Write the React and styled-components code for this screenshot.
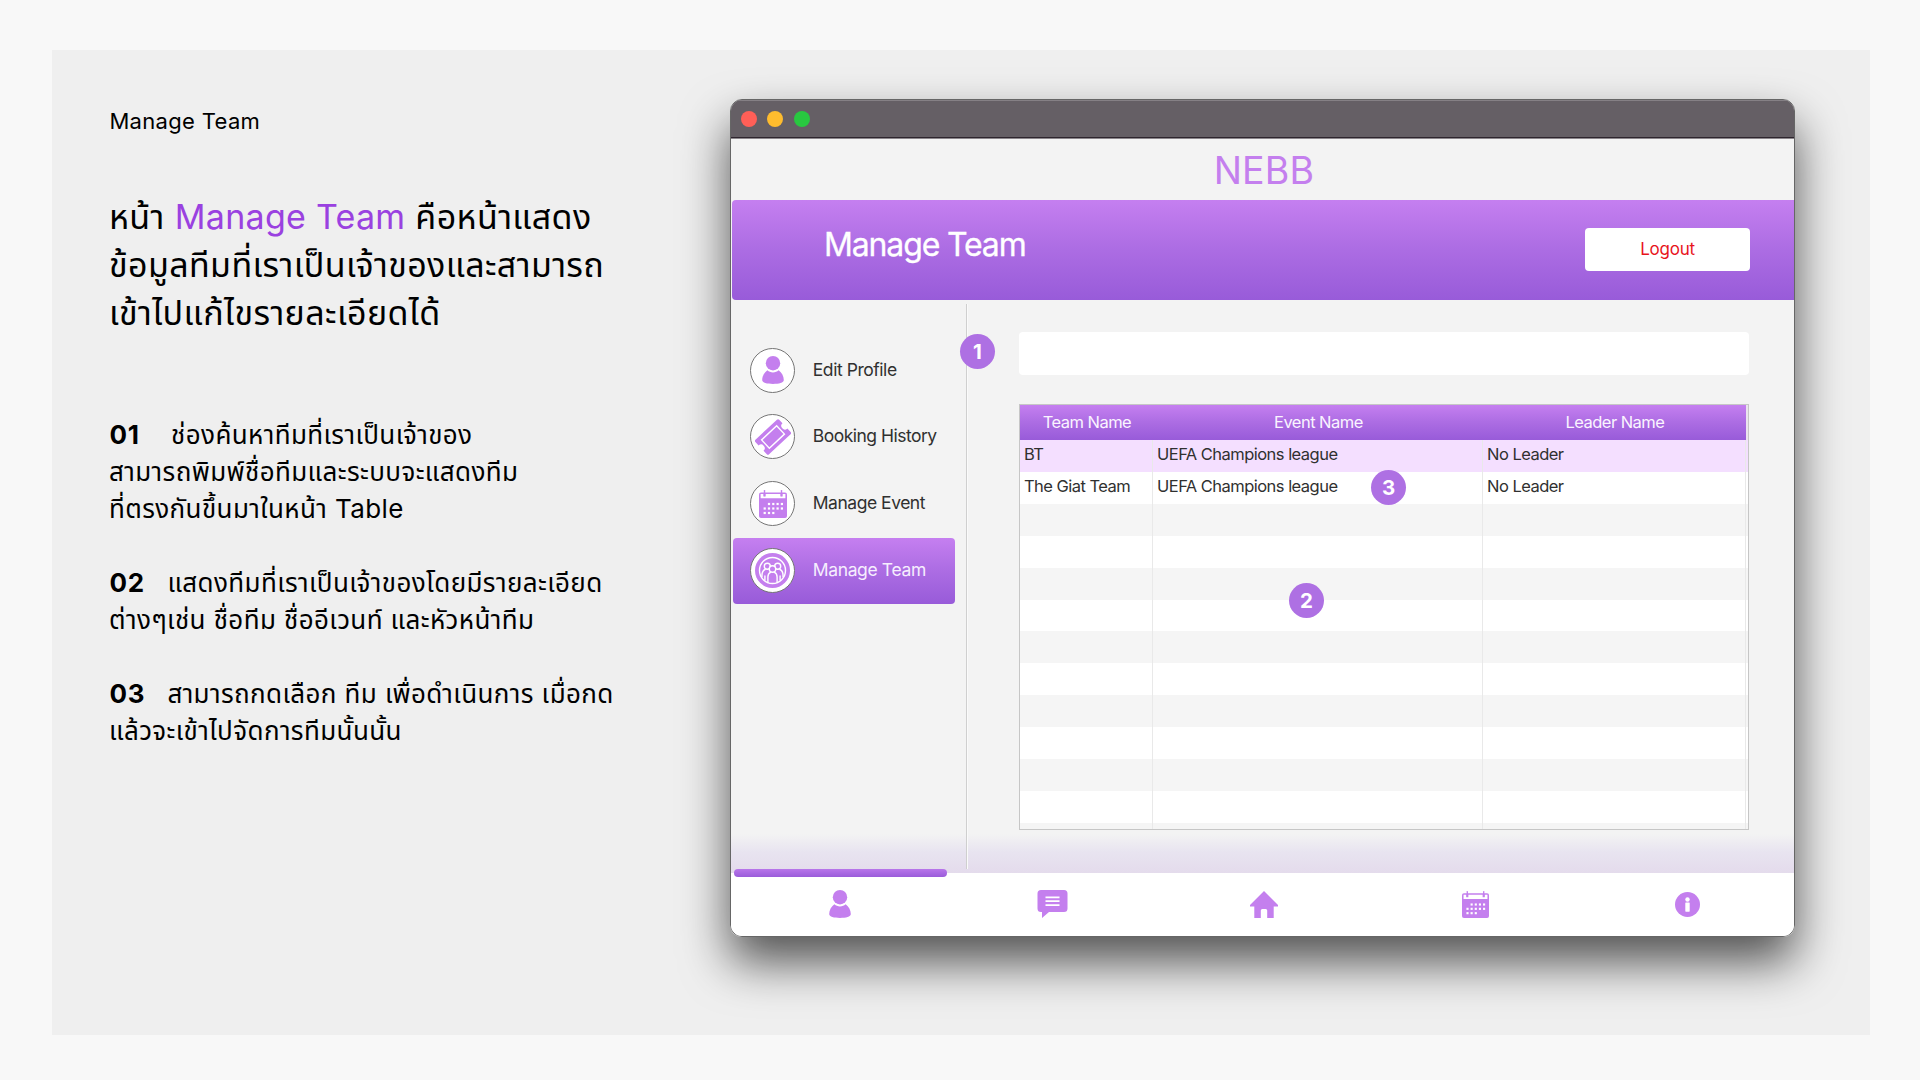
import React from 'react';
import styled, { createGlobalStyle, css } from 'styled-components';

const GlobalStyle = createGlobalStyle`
  *, *::before, *::after { box-sizing: border-box; }
  body { margin: 0; background: #f8f8f8; }
`;

const accent = '#c47fee';
const gradient = 'linear-gradient(180deg, #c57ff0 0%, #ae6ee4 45%, #985bd9 100%)';

const Page = styled.main`
  width: 1920px;
  height: 1080px;
  padding: 50px 50px 45px 52px;
  background: #f8f8f8;
  overflow: hidden;
  font-family: Inter, "Noto Sans Thai", "Noto Sans", sans-serif;
  color: #000;
`;

const Panel = styled.div`
  display: flex;
  height: 985px;
  background: #efefef;
`;

const Notes = styled.section`
  width: 678px;
  padding: 57px 0 0 57px;
  white-space: pre;
`;

const Eyebrow = styled.p`
  margin: 0;
  padding-left: 0.4px;
  font-size: 22px;
  line-height: 28px;
  letter-spacing: 0.32px;
`;

const Heading = styled.h1`
  margin: 58px 0 79px;
  font-size: 34px;
  font-weight: 400;
  line-height: 48px;
  letter-spacing: 0.4px;
`;

const Line = styled.span`
  display: block;
`;

const Highlight = styled.span`
  color: #9a41e0;
  letter-spacing: 0.28px;
`;

const Note = styled.p`
  margin: 0 0 37px;
  font-size: 26px;
  line-height: 37px;
  letter-spacing: 0.4px;
`;

const Num = styled.strong`
  display: inline-block;
  width: ${(p) => p.$w}px;
  padding-left: 0.4px;
  font-weight: 700;
  letter-spacing: 0.9px;
`;

const Window = styled.section`
  position: relative;
  width: 1065px;
  height: 838px;
  margin-top: 49px;
  border-radius: 12px;
  box-shadow: 0 25px 48px rgba(0, 0, 0, 0.66);
`;

const Frame = styled.div`
  display: flex;
  flex-direction: column;
  height: 100%;
  border: 1px solid #666;
  border-radius: 12px;
  overflow: hidden;
  background: #f3f3f3;
`;

const TitleBar = styled.header`
  display: flex;
  align-items: center;
  gap: 10.5px;
  height: 39px;
  flex: none;
  padding: 0 0 1px 9.5px;
  background: #655f65;
  border-top: 1px solid #858085;
  border-bottom: 1px solid #8b868b;
  box-shadow: inset 0 -1px 0 #2e252e;
`;

const Light = styled.span`
  width: 16px;
  height: 16px;
  border-radius: 50%;
  background: ${(p) => p.$color};
`;

const Brand = styled.div`
  display: flex;
  align-items: center;
  justify-content: center;
  height: 61px;
  flex: none;
  padding: 2px 0 0 3px;
  color: ${accent};
  font-size: 37.5px;
  letter-spacing: 0.2px;
`;

const Hero = styled.div`
  display: flex;
  align-items: center;
  justify-content: space-between;
  height: 100px;
  flex: none;
  margin-left: 1px;
  padding: 0 44px 0 92px;
  border-radius: 4px 0 0 4px;
  background: ${gradient};
`;

const HeroTitle = styled.h2`
  margin: 0;
  padding-bottom: 11px;
  color: #fff;
  font-size: 32px;
  font-weight: 400;
  letter-spacing: -1.15px;
  -webkit-text-stroke: 0.3px #fff;
`;

const Logout = styled.button`
  width: 165px;
  height: 43px;
  margin-bottom: 1px;
  padding: 0 0 1px;
  border: 0;
  border-radius: 4px;
  background: #fff;
  color: #e8141c;
  font: 400 17px Inter, sans-serif;
  letter-spacing: -0.25px;
`;

const Body = styled.div`
  display: flex;
  flex: 1;
  background: linear-gradient(180deg, rgba(228, 219, 237, 0) 0 534px, #e8e4f0 552px, #e4dbec 573px);
`;

const Sidebar = styled.nav`
  display: flex;
  flex-direction: column;
  gap: 0.67px;
  width: 235px;
  padding: 38px 0 0 2px;
`;

const SideItem = styled.a`
  display: flex;
  align-items: center;
  gap: 17.8px;
  width: 222px;
  height: 66px;
  padding: 0 0 1.5px 17px;
  border-radius: 4px;
  color: #303030;
  font-size: 17.5px;
  letter-spacing: ${(p) => p.$track}px;
  ${(p) => p.$active && css`
    background: ${gradient};
    color: #f6eefe;
  `}
`;

const SideLabel = styled.span`
  padding-bottom: 2px;
`;

const Avatar = styled.span`
  display: flex;
  align-items: center;
  justify-content: center;
  width: 45px;
  height: 45px;
  border: 1px solid #757575;
  border-radius: 50%;
  background: #fff;
`;

const Divider = styled.div`
  width: 2px;
  margin: 4px 0 4px;
  background: linear-gradient(90deg, #cfcfcf 50%, #fafafa 50%);
`;

const Content = styled.div`
  padding: 32px 0 0 51px;
`;

const Search = styled.input`
  display: block;
  width: 730px;
  height: 43px;
  padding: 0 12px;
  border: 0;
  border-radius: 4px;
  background: #fff;
`;

const Table = styled.div`
  display: flex;
  flex-direction: column;
  width: 730px;
  height: 426px;
  margin-top: 29px;
  border: 1px solid #c6c6c6;
  background: #f5f5f5;
  color: #303030;
  font-size: 16.5px;
  letter-spacing: -0.53px;
`;

const columns = css`
  display: grid;
  grid-template-columns: 133px 330px 263px;
`;

const HeadRow = styled.div`
  ${columns}
  height: 35px;
  flex: none;
  background: linear-gradient(#ebe3ef, #ebe3ef) right / 2px 100% no-repeat, ${gradient};
  color: #faf4ff;
  text-align: center;
  line-height: 35px;
`;

const HeadCell = styled.span`
  padding-left: 0.8px;
`;

const Row = styled.div`
  ${columns}
  height: 31.92px;
  flex: none;
  background: ${(p) => p.$bg};
`;

const Cell = styled.div`
  padding-left: 4px;
  line-height: 29px;
  border-right: 1px solid #e9e9e9;
`;

const Filler = styled.div`
  ${columns}
  flex: 1;
`;

const TabBar = styled.nav`
  position: relative;
  display: grid;
  grid-template-columns: repeat(5, 211.8px);
  height: 63px;
  flex: none;
  padding: 0 0 1px 3.5px;
  background: #fff;
`;

const Indicator = styled.span`
  position: absolute;
  left: 3px;
  top: -4px;
  width: 213px;
  height: 7.5px;
  border-radius: 4px;
  background: linear-gradient(180deg, #b875ea, #9a5cda);
`;

const Tab = styled.a`
  display: flex;
  align-items: center;
  justify-content: center;
`;

const Badge = styled.span`
  position: absolute;
  left: ${(p) => p.$x}px;
  top: ${(p) => p.$y}px;
  width: 35px;
  height: 35px;
  border-radius: 50%;
  background: #ae70e3;
  color: #fff;
  font-size: 20.5px;
  font-weight: 700;
  line-height: 35px;
  text-align: center;
`;

const Icon = styled.svg`
  display: block;
  flex: none;
  fill: ${accent};
`;

const UserIcon = () => (
  <Icon width="28" height="28" viewBox="0 0 28 28">
    <circle cx="14" cy="7.2" r="7.2" />
    <path d="M8.4 14.2c1.5 1.4 3.4 2.2 5.6 2.2s4.1-.8 5.6-2.2c3.2 2.2 5.2 6 5.2 9.9 0 2.7-4.8 3.9-10.8 3.9S3.2 26.8 3.2 24.1c0-3.9 2-7.700 5.200-9.900z" />
  </Icon>
);

const TicketIcon = () => (
  <Icon width="36" height="36" viewBox="-18 -18 36 36">
    <g transform="rotate(-43)">
      <path d="M-14.7-10h29.4q1.600 0 1.600 1.600v4.800a3.600 3.600 0 0 0 0 7.200v4.800q0 1.600-1.600 1.600h-29.400q-1.600 0-1.600-1.600v-4.800a3.600 3.600 0 0 0 0-7.200v-4.800q0-1.600 1.600-1.600z" />
      <rect x="-10.300" y="-5.700" width="20.600" height="11.400" fill="none" stroke="#fff" strokeWidth="1.400" />
    </g>
  </Icon>
);

const dotRows = [
  { y: 14, xs: [10, 14.3, 18.6, 22.9] },
  { y: 18.5, xs: [5.7, 10, 14.3, 18.6, 22.9] },
  { y: 23, xs: [5.7, 10, 14.3] },
];

const CalendarIcon = ({ width, height }) => (
  <Icon width={width} height={height} viewBox="0 0 28 28" preserveAspectRatio="none">
    <rect y="2.4" width="28" height="25.6" rx="2" />
    <path d="M1.6 4h2.8v2.4h2.2V4h14.8v2.4h2.2V4h2.8v4.3H1.600z" fill="#fff" />
    <rect x="4.800" width="1.400" height="6.200" rx=".6" />
    <rect x="21.800" width="1.400" height="6.200" rx=".6" />
    {dotRows.map(({ y, xs }) => xs.map((x) => (
      <rect key={`${x}-${y}`} x={x - 1.1} y={y - 1.1} width="2.2" height="2.2" fill="#fff" />
    )))}
  </Icon>
);

const TeamIcon = () => (
  <Icon width="35" height="35" viewBox="-17.5 -17.5 35 35">
    <circle r="17.5" />
    <g fill="none" stroke="#fff" strokeWidth="1.4" strokeLinecap="round">
      <circle r="13" />
      <circle cx="-5.2" cy="-4.2" r="3" />
      <circle cx="5.2" cy="-4.2" r="3" />
      <path d="M-10.5 6c-.3-3.8.8-6 3-7M10.5 6c.3-3.8-.8-6-3-7" />
      <circle cx="0" cy="-1.5" r="3.2" fill={accent} />
      <path d="M-4.6 12V6.5c0-2.600 1-4 2.600-4.700M4.600 12V6.500c0-2.600-1-4-2.600-4.700M-7.600 9.500V5.500M7.600 9.500V5.500" />
    </g>
  </Icon>
);

const ChatIcon = () => (
  <Icon width="31" height="28" viewBox="0 0 31 28">
    <path d="M4 0h23q3.5 0 3.5 3.5v15q0 3.5-3.5 3.5H12l-7 6v-6H4Q.5 22 .5 18.5v-15Q.5 0 4 0z" />
    <path d="M8.5 7.3h14M8.5 11.2h14M8.5 15.1h14" stroke="#fff" strokeWidth="1.7" />
  </Icon>
);

const HomeIcon = () => (
  <Icon width="28" height="27" viewBox="0 0 28 27">
    <path d="M14 0l14 14v1.5h-4.3V27h-6.5v-7.5q0-1.5-1.5-1.5h-3.4q-1.500 0-1.500 1.500V27H4.300V15.500H0V14z" />
  </Icon>
);

const InfoIcon = () => (
  <Icon width="25" height="25" viewBox="0 0 25 25">
    <circle cx="12.5" cy="12.5" r="12.5" />
    <circle cx="12.5" cy="7.5" r="2.2" fill="#fff" />
    <rect x="10.3" y="10.5" width="4.4" height="9.2" rx=".6" fill="#fff" />
  </Icon>
);

const sideItems = [
  { label: 'Edit Profile', icon: <UserIcon />, track: -0.45 },
  { label: 'Booking History', icon: <TicketIcon />, track: -0.51 },
  { label: 'Manage Event', icon: <CalendarIcon width={28} height={28} />, track: -0.48 },
  { label: 'Manage Team', icon: <TeamIcon />, track: -0.37, active: true },
];

const teams = [
  ['BT', 'UEFA Champions league', 'No Leader'],
  ['The Giat Team', 'UEFA Champions league', 'No Leader'],
  ...Array.from({ length: 10 }, () => ['', '', '']),
];

const rowColor = (i) => (i === 0 ? '#f4dfff' : i % 2 ? '#fff' : '#f5f5f5');

export default function App() {
  return (
    <>
      <GlobalStyle />
      <Page>
        <Panel>
          <Notes>
            <Eyebrow>Manage Team</Eyebrow>
            <Heading>
              <Line>หน้า <Highlight>Manage Team</Highlight> คือหน้าแสดง</Line>
              <Line>ข้อมูลทีมที่เราเป็นเจ้าของและสามารถ</Line>
              <Line>เข้าไปแก้ไขรายละเอียดได้</Line>
            </Heading>
            <Note>
              <Line><Num $w={62}>01</Num>ช่องค้นหาทีมที่เราเป็นเจ้าของ</Line>
              <Line>สามารถพิมพ์ชื่อทีมและระบบจะแสดงทีม</Line>
              <Line>ที่ตรงกันขึ้นมาในหน้า Table</Line>
            </Note>
            <Note>
              <Line><Num $w={58.4}>02</Num>แสดงทีมที่เราเป็นเจ้าของโดยมีรายละเอียด</Line>
              <Line>ต่างๆเช่น ชื่อทีม ชื่ออีเวนท์ และหัวหน้าทีม</Line>
            </Note>
            <Note>
              <Line><Num $w={58.4}>03</Num>สามารถกดเลือก ทีม เพื่อดำเนินการ เมื่อกด</Line>
              <Line>แล้วจะเข้าไปจัดการทีมนั้นนั้น</Line>
            </Note>
          </Notes>

          <Window>
            <Frame>
              <TitleBar>
                <Light $color="#ff5f57" />
                <Light $color="#febc2e" />
                <Light $color="#28c840" />
              </TitleBar>
              <Brand>NEBB</Brand>
              <Hero>
                <HeroTitle>Manage Team</HeroTitle>
                <Logout>Logout</Logout>
              </Hero>
              <Body>
                <Sidebar>
                  {sideItems.map((item) => (
                    <SideItem key={item.label} $active={item.active} $track={item.track}>
                      <Avatar>{item.icon}</Avatar>
                      <SideLabel>{item.label}</SideLabel>
                    </SideItem>
                  ))}
                </Sidebar>
                <Divider />
                <Content>
                  <Search aria-label="Search" />
                  <Table>
                    <HeadRow>
                      <HeadCell>Team Name</HeadCell>
                      <HeadCell>Event Name</HeadCell>
                      <HeadCell>Leader Name</HeadCell>
                    </HeadRow>
                    {teams.map((team, i) => (
                      <Row key={i} $bg={rowColor(i)}>
                        {team.map((value, c) => (
                          <Cell key={c}>{value}</Cell>
                        ))}
                      </Row>
                    ))}
                    <Filler><Cell /><Cell /><Cell /></Filler>
                  </Table>
                </Content>
              </Body>
              <TabBar>
                <Indicator />
                <Tab><UserIcon /></Tab>
                <Tab><ChatIcon /></Tab>
                <Tab><HomeIcon /></Tab>
                <Tab><CalendarIcon width={27} height={27} /></Tab>
                <Tab><InfoIcon /></Tab>
              </TabBar>
            </Frame>
            <Badge $x={230} $y={235}>1</Badge>
            <Badge $x={559} $y={484}>2</Badge>
            <Badge $x={641} $y={371}>3</Badge>
          </Window>
        </Panel>
      </Page>
    </>
  );
}
